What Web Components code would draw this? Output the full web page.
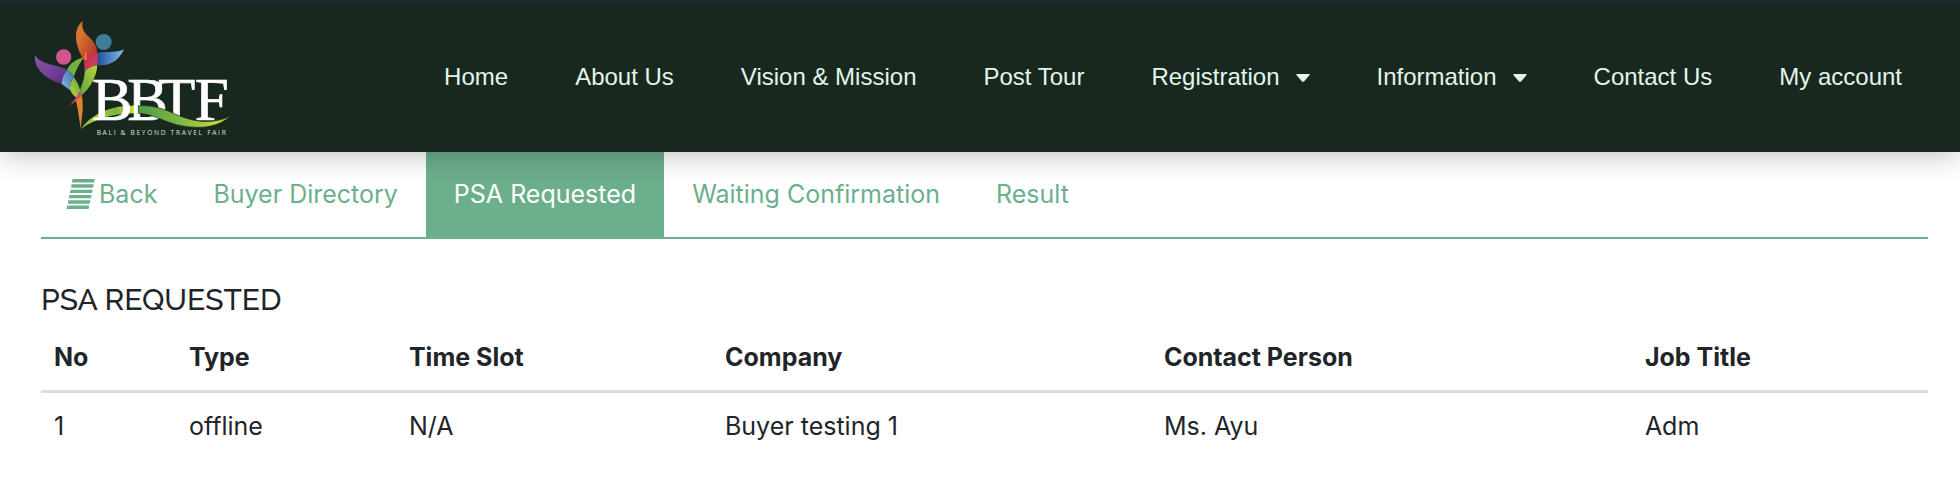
<!DOCTYPE html>
<html lang="en">
<head>
<meta charset="UTF-8">
<meta name="viewport" content="width=device-width, initial-scale=1.0">
<title>BBTF - PSA Requested</title>
<style>
  body {
    margin: 0;
    background: #fff;
    color: #212529;
    font-family: Inter, 'Liberation Sans', sans-serif;
    font-size: 25px;
    line-height: 40px;
  }
</style>
</head>
<body>
  <site-header>
    <bbtf-logo slot="logo"></bbtf-logo>
    <nav-item href="#home">Home</nav-item>
    <nav-item href="#about">About Us</nav-item>
    <nav-item href="#vision">Vision &amp; Mission</nav-item>
    <nav-item href="#post-tour">Post Tour</nav-item>
    <nav-item href="#registration" dropdown>Registration</nav-item>
    <nav-item href="#information" dropdown>Information</nav-item>
    <nav-item href="#contact">Contact Us</nav-item>
    <nav-item href="#account">My account</nav-item>
  </site-header>

  <page-content>
    <tab-bar slot="tabs">
      <tab-link href="#back" icon>Back</tab-link>
      <tab-link href="#buyers">Buyer Directory</tab-link>
      <tab-link href="#requested" active>PSA Requested</tab-link>
      <tab-link href="#waiting">Waiting Confirmation</tab-link>
      <tab-link href="#result">Result</tab-link>
    </tab-bar>
    <span slot="title">PSA REQUESTED</span>
    <psa-table></psa-table>
  </page-content>

<script>
class SiteHeader extends HTMLElement {
  constructor() {
    super();
    this.attachShadow({ mode: 'open' });
  }

  connectedCallback() {
    this.shadowRoot.innerHTML = /* html */`
      <style>
        :host {
          display: block;
          position: relative;
          z-index: 1;
          background: #18281e;
          border-top: 4px solid #1f262b;
          box-shadow: 0 0 30px rgba(0, 0, 0, 0.3);
        }

        header {
          display: flex;
          align-items: center;
          justify-content: space-between;
          min-height: 148px;
          padding: 0 24px 0 32px;
          box-sizing: border-box;
        }

        nav {
          display: flex;
          align-items: center;
          padding-bottom: 2px;
        }
      </style>
      <header>
        <slot name="logo"></slot>
        <nav><slot></slot></nav>
      </header>
    `;
  }
}

class BbtfLogo extends HTMLElement {
  constructor() {
    super();
    this.attachShadow({ mode: 'open' });
  }

  connectedCallback() {
    this.shadowRoot.innerHTML = /* html */`
      <style>
        :host { display: block; }
        svg { display: block; width: 200px; height: 120px; }
        .name { font-family: 'Liberation Serif', serif; font-size: 183px; fill: #fff; stroke: #fff; stroke-width: 2px; }
        .tagline { font-family: 'Open Sans', sans-serif; font-size: 20px; letter-spacing: 5px; fill: #dde2dc; }
      </style>
      <svg viewBox="36 54 600 360" role="img" aria-label="BBTF">
        <defs>
          <linearGradient id="purple" x1="0" y1="0" x2="1" y2="1">
            <stop offset="0" stop-color="#8b5aa8"/><stop offset="1" stop-color="#5c2a86"/>
          </linearGradient>
          <linearGradient id="orange" x1="0" y1="0" x2="1" y2="1">
            <stop offset="0.3" stop-color="#d9742f"/><stop offset="1" stop-color="#a82f24"/>
          </linearGradient>
          <linearGradient id="blue" x1="0" y1="0" x2="1" y2="0">
            <stop offset="0" stop-color="#1f4c9c"/><stop offset="1" stop-color="#7fc0e6"/>
          </linearGradient>
          <linearGradient id="sky" x1="0" y1="1" x2="1" y2="0">
            <stop offset="0" stop-color="#84bde6"/><stop offset="1" stop-color="#3c70b4"/>
          </linearGradient>
          <linearGradient id="leaf" x1="0" y1="1" x2="1" y2="0">
            <stop offset="0" stop-color="#c4d93c"/><stop offset="1" stop-color="#58a046"/>
          </linearGradient>
          <linearGradient id="leaf2" x1="1" y1="0" x2="0" y2="1">
            <stop offset="0" stop-color="#bcd33c"/><stop offset="1" stop-color="#5ba345"/>
          </linearGradient>
          <linearGradient id="pink" x1="0" y1="0" x2="1" y2="1">
            <stop offset="0" stop-color="#c82a5c"/><stop offset="1" stop-color="#cc4658"/>
          </linearGradient>
          <linearGradient id="wave-back" x1="0" y1="0" x2="1" y2="0">
            <stop offset="0" stop-color="#7fb843"/><stop offset="0.3" stop-color="#b2cf3b"/>
            <stop offset="0.6" stop-color="#79b543"/><stop offset="0.9" stop-color="#c4d93c"/>
          </linearGradient>
          <linearGradient id="wave-front" x1="0" y1="0" x2="1" y2="0">
            <stop offset="0" stop-color="#4b9c48"/><stop offset="0.5" stop-color="#86b93f"/>
            <stop offset="0.85" stop-color="#c4d93c"/><stop offset="1" stop-color="#8cbc3e"/>
          </linearGradient>
        </defs>

        <!-- heads -->
        <circle cx="131" cy="171" r="23" fill="#d2548c"/>
        <circle cx="251" cy="126" r="24" fill="#3f7d96"/>

        <!-- left figure -->
        <path d="M45 166C58 186 82 192 108 197Q130 202 141 210Q130 226 125 252C96 242 77 232 63 216C49 201 43 184 45 166Z" fill="url(#purple)"/>
        <path d="M141 210Q156 219 161 230Q150 247 149 270L125 252Q127 228 141 210Z" fill="url(#sky)"/>
        <path d="M141 210C150 189 168 178 193 172Q178 187 161 230Q153 216 141 210Z" fill="#75ad47"/>
        <path d="M161 230Q176 250 181 271L171 295Q154 282 149 266Q151 245 161 230Z" fill="url(#leaf)"/>
        <path d="M181 271Q190 294 188 330L182 386Q177 350 172 320L167 300Q173 290 181 271Z" fill="#e2832e"/>
        <path d="M181 271L187 285Q174 299 149 317Q170 294 181 271Z" fill="#d04b72"/>

        <!-- right figure -->
        <path d="M188 63C184 84 191 96 204 108C222 126 232 139 231 158Q204 157 190 178C178 158 168 132 168 108C168 88 176 73 188 63Z" fill="url(#orange)"/>
        <path d="M231 158C254 152 285 161 312 148C299 179 270 201 233 195Z" fill="url(#blue)"/>
        <path d="M191 177Q204 156 232 158Q236 178 232 196Q208 198 194 215Q194 195 191 177Z" fill="url(#pink)"/>
        <path d="M232 196C230 229 210 266 185 286L180 270C187 250 194 235 194 215Q208 198 232 196Z" fill="url(#leaf2)"/>
        <path d="M196 150Q203 165 200 180L191 178Q196 165 196 150Z" fill="#e47a30"/>

        <!-- the wave runs behind the first B and over the rest -->
        <path d="M182 387C212 349 262 314 355 317V340C292 339 232 352 182 387Z" fill="url(#wave-back)"/>
        <text class="name" x="216 322 414 524" y="361">BBTF</text>
        <path d="M355 317C388 315 424 323 456 338C520 368 575 374 632 348C592 384 536 389 470 374C425 363 400 342 355 340Z" fill="url(#wave-front)" stroke="#18281e" stroke-width="2"/>
        <text class="tagline" x="230" y="405">BALI &amp; BEYOND TRAVEL FAIR</text>
      </svg>
    `;
  }
}

class NavItem extends HTMLElement {
  constructor() {
    super();
    this.attachShadow({ mode: 'open' });
  }

  get href() { return this.getAttribute('href') ?? '#'; }

  connectedCallback() {
    this.shadowRoot.innerHTML = /* html */`
      <style>
        :host { display: block; }

        a {
          display: flex;
          align-items: center;
          gap: 16px;
          padding: 0 34px 0 33px;
          color: #e3f5eb;
          font-family: 'Liberation Sans', sans-serif;
          font-size: 24px;
          line-height: 36px;
          text-decoration: none;
          white-space: nowrap;
        }

        svg { width: 14px; height: 8px; margin-top: 2px; fill: currentColor; }
      </style>
      <a href="${this.href}"><slot></slot>${this.hasAttribute('dropdown') ? `
        <svg viewBox="0 0 14 8"><path d="M1 0h12q1 0 .6 1L8 7.400q-1 .8-2 0L.4 1Q0 0 1 0Z"/></svg>` : ''}</a>
    `;
  }
}

class PageContent extends HTMLElement {
  constructor() {
    super();
    this.attachShadow({ mode: 'open' });
  }

  connectedCallback() {
    this.shadowRoot.innerHTML = /* html */`
      <style>
        :host { display: block; padding: 0 32px 40px 41px; }

        h1 {
          margin: 41px 0 4px;
          font-family: Raleway, Lato, sans-serif;
          font-size: 30px;
          font-weight: 500;
          line-height: 40px;
        }
      </style>
      <slot name="tabs"></slot>
      <main>
        <h1><slot name="title"></slot></h1>
        <slot></slot>
      </main>
    `;
  }
}

class TabBar extends HTMLElement {
  constructor() {
    super();
    this.attachShadow({ mode: 'open' });
  }

  connectedCallback() {
    this.shadowRoot.innerHTML = /* html */`
      <style>
        :host { display: block; border-bottom: 2px solid #6caf8d; }
        nav { display: flex; }
      </style>
      <nav><slot></slot></nav>
    `;
  }
}

class TabLink extends HTMLElement {
  constructor() {
    super();
    this.attachShadow({ mode: 'open' });
  }

  get href() { return this.getAttribute('href') ?? '#'; }

  connectedCallback() {
    this.shadowRoot.innerHTML = /* html */`
      <style>
        :host { display: block; }

        a {
          display: flex;
          align-items: center;
          gap: 4px;
          padding: 22px 28px 23px;
          color: #6caf8d;
          text-decoration: none;
          white-space: nowrap;
        }

        :host([icon]) a { padding-left: 25px; }
        :host([active]) a { background: #6caf8d; color: #fff; }
        svg { width: 29px; height: 32px; fill: currentColor; }
      </style>
      <a href="${this.href}">${this.hasAttribute('icon') ? `
        <svg viewBox="0 0 30 32">
          <path d="M6.800 .5h23l-.8 3.500H6.200zM5.800 6h22.900l-.8 3.500H5.200zM4.700 11.500h22.900l-.8 3.500H4.100zM3.600 17h22.900l-.8 3.500H3zM2.400 22.500h22.900l-.8 3.500H1.800zM1.200 28h22.900l-.8 3.500H.5z"/>
        </svg>` : ''}<slot></slot></a>
    `;
  }
}

class PsaTable extends HTMLElement {
  constructor() {
    super();
    this.attachShadow({ mode: 'open' });
  }

  connectedCallback() {
    this.shadowRoot.innerHTML = /* html */`
      <style>
        :host { display: block; }

        table {
          width: 100%;
          border-collapse: collapse;
          table-layout: fixed;
        }

        th, td {
          box-sizing: border-box;
          padding: 13px;
          text-align: left;
          vertical-align: top;
        }

        th { font-weight: 700; border-bottom: 3px solid #ddd; }
        .no { width: 7.15%; }
        .type { width: 11.66%; }
        .slot { width: 16.75%; }
        .company { width: 23.26%; }
        .contact { width: 25.49%; }
      </style>
      <table>
        <colgroup>
          <col class="no">
          <col class="type">
          <col class="slot">
          <col class="company">
          <col class="contact">
          <col>
        </colgroup>
        <thead>
          <tr>
            <th>No</th>
            <th>Type</th>
            <th>Time Slot</th>
            <th>Company</th>
            <th>Contact Person</th>
            <th>Job Title</th>
          </tr>
        </thead>
        <tbody>
          <tr>
            <td>1</td>
            <td>offline</td>
            <td>N/A</td>
            <td>Buyer testing 1</td>
            <td>Ms. Ayu</td>
            <td>Adm</td>
          </tr>
        </tbody>
      </table>
    `;
  }
}

customElements.define('site-header', SiteHeader);
customElements.define('bbtf-logo', BbtfLogo);
customElements.define('nav-item', NavItem);
customElements.define('page-content', PageContent);
customElements.define('tab-bar', TabBar);
customElements.define('tab-link', TabLink);
customElements.define('psa-table', PsaTable);
</script>
</body>
</html>
